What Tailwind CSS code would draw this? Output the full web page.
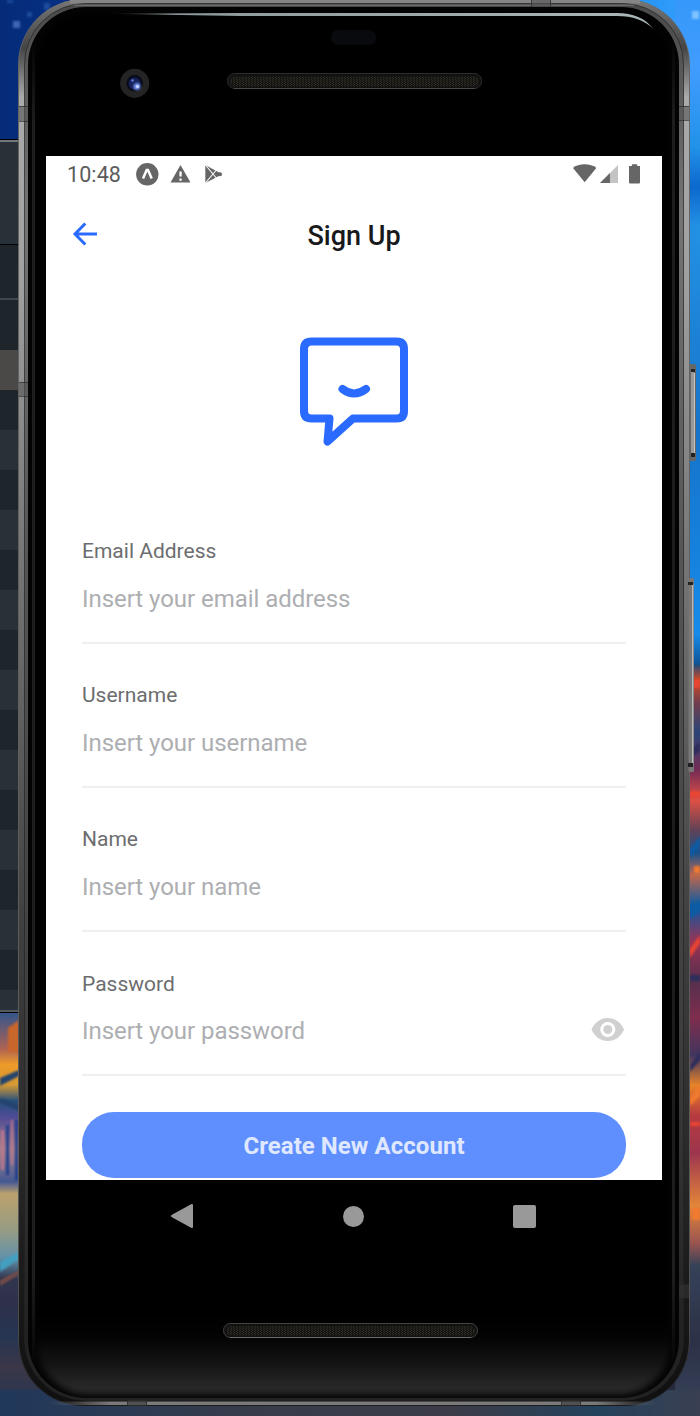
<!DOCTYPE html>
<html lang="en">
<head>
<meta charset="utf-8">
<title>Sign Up</title>
<script src="https://cdn.jsdelivr.net/npm/@tailwindcss/browser@4"></script>
</head>
<body class="relative h-[1416px] w-[700px] overflow-hidden bg-[#252b3d] font-['Roboto','Noto_Sans',sans-serif]">
<svg class="absolute inset-0" width="700" height="1416" viewBox="0 0 700 1416" aria-hidden="true">
  <defs>
    <linearGradient id="topsky"><stop offset="0" stop-color="#052b78"/><stop offset=".12" stop-color="#073187"/><stop offset=".85" stop-color="#178bea"/><stop offset="1" stop-color="#38a0ff"/></linearGradient>
    <linearGradient id="rightsky" x2="0" y2="1"><stop offset="0" stop-color="#3598fa"/><stop offset=".1" stop-color="#419cff"/><stop offset=".22" stop-color="#2292e8"/><stop offset=".28" stop-color="#0c68ce"/><stop offset=".34" stop-color="#2391e3"/><stop offset=".65" stop-color="#1674ca"/><stop offset=".95" stop-color="#168bea"/><stop offset="1" stop-color="#0d4b89"/></linearGradient>
    <linearGradient id="leftcity" x2="0" y2="1"><stop offset="0" stop-color="#30558c"/><stop offset=".09" stop-color="#ac6255"/><stop offset=".13" stop-color="#ed9b28"/><stop offset=".18" stop-color="#d79a34"/><stop offset=".22" stop-color="#25517d"/><stop offset=".26" stop-color="#504b96"/><stop offset=".34" stop-color="#a6838c"/><stop offset=".42" stop-color="#445993"/><stop offset=".45" stop-color="#bba16c"/><stop offset=".54" stop-color="#969c83"/><stop offset=".61" stop-color="#6291ab"/><stop offset=".66" stop-color="#30364f"/><stop offset=".72" stop-color="#2f3049"/><stop offset=".8" stop-color="#253553"/><stop offset=".88" stop-color="#3b3748"/><stop offset="1" stop-color="#203554"/></linearGradient>
    <linearGradient id="rightcity" x2="0" y2="1"><stop offset="0" stop-color="#254b78"/><stop offset=".02" stop-color="#d34823"/><stop offset=".05" stop-color="#723d4d"/><stop offset=".09" stop-color="#294477"/><stop offset=".14" stop-color="#752c54"/><stop offset=".18" stop-color="#df5044"/><stop offset=".22" stop-color="#614256"/><stop offset=".25" stop-color="#17518d"/><stop offset=".28" stop-color="#c1674b"/><stop offset=".32" stop-color="#095aa4"/><stop offset=".37" stop-color="#9b3253"/><stop offset=".42" stop-color="#55304e"/><stop offset=".47" stop-color="#7f2d4d"/><stop offset=".52" stop-color="#41365f"/><stop offset=".56" stop-color="#e78328"/><stop offset=".6" stop-color="#b63a3f"/><stop offset=".65" stop-color="#9d354e"/><stop offset=".72" stop-color="#e38639"/><stop offset=".77" stop-color="#9a5450"/><stop offset=".8" stop-color="#354157"/><stop offset=".9" stop-color="#2c3147"/><stop offset="1" stop-color="#38445b"/></linearGradient>
    <linearGradient id="base"><stop offset="0" stop-color="#20385b"/><stop offset=".35" stop-color="#373c4b"/><stop offset=".65" stop-color="#3c3c49"/><stop offset=".85" stop-color="#24425b"/><stop offset="1" stop-color="#3a3f52"/></linearGradient>
    <linearGradient id="metal" x2="0" y2="1"><stop offset="0" stop-color="#777"/><stop offset=".035" stop-color="#454545"/><stop offset=".07" stop-color="#aaa"/><stop offset=".2" stop-color="#a0a0a0"/><stop offset=".35" stop-color="#808080"/><stop offset=".5" stop-color="#626262"/><stop offset=".65" stop-color="#414141"/><stop offset=".78" stop-color="#303030"/><stop offset=".92" stop-color="#191919"/><stop offset="1" stop-color="#101010"/></linearGradient>
    <linearGradient id="outer" x2="0" y2="1"><stop offset="0" stop-color="#666"/><stop offset=".85" stop-color="#5a5a5a"/><stop offset=".95" stop-color="#4a4a4a"/><stop offset=".98" stop-color="#1a1a1a"/></linearGradient>
    <linearGradient id="inner" x2="0" y2="1"><stop offset="0" stop-color="#4a4a4a"/><stop offset=".15" stop-color="#747474"/><stop offset=".4" stop-color="#555"/><stop offset=".75" stop-color="#3d3d3d"/><stop offset=".95" stop-color="#222"/></linearGradient>
    <linearGradient id="edge"><stop offset="0" stop-color="#777" stop-opacity="0"/><stop offset=".1" stop-color="#7a7a7a"/><stop offset=".9" stop-color="#7a7a7a"/><stop offset="1" stop-color="#777" stop-opacity="0"/></linearGradient>
    <linearGradient id="glow" gradientUnits="userSpaceOnUse" x1="0" y1="1310" x2="0" y2="1397"><stop offset="0" stop-color="#000"/><stop offset=".3" stop-color="#030303"/><stop offset=".6" stop-color="#131313"/><stop offset="1" stop-color="#303030"/></linearGradient>
    <linearGradient id="rim" gradientUnits="userSpaceOnUse" x1="0" y1="40" x2="0" y2="1370"><stop offset="0" stop-color="#1d1d1d" stop-opacity="0"/><stop offset=".06" stop-color="#1d1d1d"/><stop offset=".93" stop-color="#1d1d1d"/><stop offset="1" stop-color="#1d1d1d" stop-opacity="0"/></linearGradient>
    <linearGradient id="shine"><stop offset="0" stop-color="#8c999c" stop-opacity="0"/><stop offset=".12" stop-color="#8c999c"/><stop offset="1" stop-color="#abb6b7"/></linearGradient>
    <pattern id="mesh" width="3" height="2" patternUnits="userSpaceOnUse"><path fill="#151411" d="M0 0h3v2H0z"/><path fill="#302e29" d="M0 0h1v1H0zM2 1h1v1H2z"/></pattern>
    <filter id="soft" x="-20%" y="-20%" width="140%" height="140%" color-interpolation-filters="sRGB"><feGaussianBlur stdDeviation="1.1"/></filter>
    <filter id="wide" x="-10%" y="-10%" width="120%" height="120%" color-interpolation-filters="sRGB"><feGaussianBlur stdDeviation="3"/></filter>
  </defs>
  <!-- wallpaper -->
  <path fill="url(#topsky)" d="M0 0h700v140H0z"/>
  <path fill="url(#rightsky)" d="M675 0h25v668h-25z"/>
  <path fill="url(#rightcity)" d="M675 665h25v751h-25z"/>
  <path fill="url(#leftcity)" d="M0 1012h60v404H0z"/>
  <path fill="url(#base)" d="M0 1390h700v26H0z"/>
  <g filter="url(#soft)">
    <path fill="#3c66b5" d="M13 21h7v7h-7z"/><path fill="#1d4b9d" d="M44 3h6v7h-6zM27 12h5v5h-5zM7 0h6v3H7z"/>
    <path fill="#7ec2ff" d="M692 11h7v8h-7z"/>
    <path fill="#c9662c" d="M8 1028l11-8v32H8z"/><path fill="#24446e" d="M0 1078l19-8v6L0 1086zM0 1098l19 6v7L0 1103z"/>
    <path fill="#b9768b" d="M1 1130h3v40H1zM11 1120h2v45h-2z"/><path fill="#213e8a" d="M6 1125h3v50H6zM15 1120h3v60h-3z"/>
    <path fill="#43a0c0" d="M0 1262l19-10v7L0 1272z"/><path fill="#744c4a" d="M0 1280l20-10v4L0 1286z"/>
    <path fill="#f07a30" d="M690 1098l10-14v12l-10 10zM694 866h6v7h-6zM692 1208h8v12h-8z"/>
    <path fill="#e94533" d="M690 791h10v6h-10zM689 950l11-15v8l-10 15zM690 1122h10v4h-10zM690 680h10v8h-10z"/>
    <path fill="#0c5ca5" d="M690 850l10-14v10l-10 12zM690 908l10-7v10l-10 8z"/>
    <path fill="#2d2d5d" d="M690 750l10-8v9l-10 7zM690 975h10v6h-10zM690 1065l10-13v8l-10 12z"/>
  </g>
  <!-- editor window behind the device -->
  <path fill="#1e262c" d="M0 139h30v873H0z"/><path fill="#293138" d="M0 142h30v102H0zM0 430h30v40H0zM0 510h30v40H0zM0 590h30v40H0zM0 670h30v40H0zM0 750h30v40H0zM0 830h30v40H0zM0 910h30v40H0zM0 990h30v20H0z"/>
  <path fill="#4a4948" d="M0 350h30v40H0z"/><path fill="#000" d="M0 139h30v1H0zM0 244h30v1H0zM0 1012h30v1H0z"/><path fill="#73787c" d="M0 140h30v2H0z"/><path fill="#555a5e" d="M0 1010h30v2H0z"/><path fill="#3f464c" d="M0 298h30v2H0z"/>
  <!-- side buttons -->
  <rect x="688" y="364" width="8" height="97" rx="2" fill="#676767"/><path fill="#999" d="M691 370h3v84h-3z"/><path fill="#c4c4c4" d="M694 373h1v80h-1z"/><path fill="#222" d="M691 369h4v3h-4zM691 453h4v4h-4z"/>
  <!-- chassis -->
  <rect x="18" y="-1" width="672" height="1407" rx="66" fill="url(#outer)"/>
  <rect x="19" y="-1" width="670" height="1406" rx="65" fill="url(#metal)"/>
  <path d="M70 1h570" stroke="#858585" stroke-width="5"/>
  <rect x="24.500" y="3.500" width="659" height="1397" rx="61" fill="url(#inner)" stroke="#222" stroke-opacity=".7"/>
  <path d="M74 5.200h560" stroke="#777"/>
  <rect x="28" y="7" width="651" height="1391" rx="58" fill="#040404"/>
  <rect x="37" y="14" width="633" height="1380" rx="50" fill="url(#glow)" filter="url(#wide)"/>
  <path fill="url(#rim)" d="M32 40h3v1330h-3zM672 40h3v1330h-3z"/>
  <path fill="url(#shine)" d="M108 13.700L240 13h377c16 0 28 5 36.500 16C644 20 633 16 617 16H240z"/>
  <path fill="url(#edge)" d="M50 1401.500h606v3.500H50z"/>
  <g fill="#555" fill-opacity=".6"><path d="M19 106h9v15h-9zM19 382h9v14h-9zM679 106h10v14h-10zM531-1h20v7h-20z"/><path fill="#333" d="M679 1284h10v14h-10zM127 1400h20v6h-20zM561 1400h20v6h-20z"/></g>
  <g stroke="#222" stroke-opacity=".6"><path d="M19 106.500h9M19 121.500h9M19 382.500h9M19 396.500h9M679 106.500h10M679 120.500h10M679 1284.500h10M679 1298.500h10M531.500 0v7M550.500 0v7M127.500 1400v6M146.500 1400v6M561.500 1400v6M580.500 1400v6"/></g>
  <rect x="688.500" y="578" width="5.500" height="194" rx="1.500" fill="#777"/><path fill="#b9b9b9" d="M692 584h1.300v180H692z"/><path fill="#222" d="M688 582h5v3h-5zM688 763h5v4h-5z"/>
  <!-- sensors, camera and speakers -->
  <rect x="331" y="30" width="45" height="15" rx="7" fill="#090a0e"/>
  <circle cx="134.700" cy="83.300" r="14.600" fill="#252424"/><circle cx="134.700" cy="83.300" r="8.300" fill="#080b19"/><circle cx="134.500" cy="83.500" r="6" fill="#152158"/><g filter="url(#soft)"><circle cx="137" cy="86.500" r="3.500" fill="#7794f1"/></g><circle cx="137.500" cy="86.500" r="1.700" fill="#c0d0ff"/><circle cx="132.500" cy="80.500" r="1.300" fill="#637ad4"/>
  <rect x="227.500" y="73.500" width="254" height="15" rx="7" fill="#111" stroke="#2c2c2c"/><rect x="230" y="76.500" width="249" height="10" rx="5" fill="url(#mesh)"/><path d="M234 88.500h241" stroke="#4a4a4a"/>
  <rect x="223.500" y="1323.500" width="254" height="14" rx="7" fill="#111" stroke="#444"/><rect x="226" y="1326" width="249" height="9.500" rx="4.700" fill="url(#mesh)"/><path d="M230 1337.500h241" stroke="#6c6c6c"/>
</svg>

<div class="relative px-[38px] pl-[46px] pt-[156px]">
  <main class="flex h-[1024px] w-[616px] flex-col overflow-hidden bg-white">
    <div class="flex h-[38px] shrink-0 items-center justify-between pl-[21px] pr-[21px]">
      <div class="flex items-center">
        <span class="w-[68px] text-[21.5px] leading-none tracking-[0.1px] text-[#5c5c5c]">10:48</span>
        <svg width="92" height="24" viewBox="0 0 92 24" fill="#666"><circle cx="12.300" cy="11.300" r="11.200"/><path d="M8 15.500l3.700-8.500h1.300l3.700 8.500" fill="none" stroke="#fff" stroke-width="2.500"/><path d="M45.500 2l10 17.600h-20z"/><path d="M44.400 8.600h2.300v5h-2.300zM44.400 15.400h2.300v2.300h-2.300z" fill="#fff"/><path d="M70.300 2l17 9.300-17 8.700z"/><path d="M70 1.500l13 15.500M70 20.500L83 5" stroke="#fff" stroke-width="1.100" fill="none"/><circle cx="85" cy="11.200" r="2"/></svg>
      </div>
      <svg width="69" height="24" viewBox="0 0 69 24" fill="#666"><path d="M1 5C6 0 19 0 24.300 5L12.700 19.200z"/><path d="M46 2v18H28z" fill="#c4c4c4"/><path d="M38 10v10H28z"/><path d="M57 3h2.900V1.200h5.300V3H68v16.500q0 1-1 1h-9q-1 0-1-1V3z"/></svg>
    </div>
    <header class="grid h-[82px] shrink-0 grid-cols-[1fr_auto_1fr] items-center pl-[26px] pr-[26px]">
      <svg width="28" height="28" viewBox="0 0 28 28" class="-mt-[2px]" fill="none" stroke="#2b6aff" stroke-width="3"><path d="M25 14H3.500M13.300 3.500L3 14l10.300 10.500"/></svg>
      <h1 class="pt-[2px] text-[27px] font-medium leading-none text-[#18191b]">Sign Up</h1>
      <span></span>
    </header>
    <div class="flex h-[241px] shrink-0 justify-center pt-[61px]">
      <svg width="108" height="109" viewBox="0 0 108 109" fill="none" stroke="#2b6aff" stroke-width="8" stroke-linejoin="round" stroke-linecap="round"><path d="M11.500 4.500h85q7.500 0 7.500 7.500v62q0 7.500-7.500 7.500H53L27.500 104.500l2-23h-18q-7.500 0-7.500-7.500V12q0-7.500 7.500-7.500z"/><path d="M42.500 52q11.500 9 23.500 0"/></svg>
    </div>
    <form class="flex flex-col px-[36px]">
      <label class="flex h-[144.25px] flex-col"><span class="mt-[22px] h-[25px] text-[21px] leading-[25px] text-[#6c6d6f]">Email Address</span><span class="mt-[18px] h-[34px] text-[24px] leading-[34px] tracking-[-0.05px] text-[#adaeb2]">Insert your email address</span><span class="mt-[25.5px] h-[2px] bg-[#efeff0]"></span></label>
      <label class="flex h-[144.25px] flex-col"><span class="mt-[22px] h-[25px] text-[21px] leading-[25px] text-[#6c6d6f]">Username</span><span class="mt-[18px] h-[34px] text-[24px] leading-[34px] tracking-[-0.05px] text-[#adaeb2]">Insert your username</span><span class="mt-[25.5px] h-[2px] bg-[#efeff0]"></span></label>
      <label class="flex h-[144.25px] flex-col"><span class="mt-[21.5px] h-[25px] text-[21px] leading-[25px] text-[#6c6d6f]">Name</span><span class="mt-[18px] h-[34px] text-[24px] leading-[34px] tracking-[-0.05px] text-[#adaeb2]">Insert your name</span><span class="mt-[25.5px] h-[2px] bg-[#efeff0]"></span></label>
      <label class="flex h-[144.25px] flex-col"><span class="mt-[22px] h-[25px] text-[21px] leading-[25px] text-[#6c6d6f]">Password</span><span class="mt-[17.5px] flex h-[34px] items-center justify-between text-[24px] leading-[34px] tracking-[-0.05px] text-[#adaeb2]">Insert your password<svg width="36" height="30" viewBox="0 0 36 30" class="-mt-[2px]"><path fill="#d0d0d0" d="M1.500 14.500C4.500 7.500 10.500 3 17.800 3S31 7.500 34 14.500C31 21.500 25 26 17.800 26S4.500 21.500 1.500 14.500z"/><circle cx="17.800" cy="14.500" r="7.500" fill="#fff"/><circle cx="17.800" cy="14.500" r="4.500" fill="#d0d0d0"/></svg></span><span class="mt-[25.5px] h-[2px] bg-[#efeff0]"></span></label>
      <button type="button" class="mt-[18px] h-[66px] rounded-[32px] bg-[#5f8fff] pt-[2px] text-[24px] font-bold tracking-[0.05px] text-[#dfe8ff]">Create New Account</button>
    </form>
  </main>
  <nav class="flex h-[72px] w-[616px] items-center justify-between pl-[124px] pr-[126.5px]">
    <svg width="24" height="26" viewBox="0 0 24 26"><path d="M22 2v22L2 13z" fill="#999" stroke="#999" stroke-width="2" stroke-linejoin="round"/></svg>
    <span class="size-[21px] rounded-full bg-[#999]"></span>
    <span class="size-[23px] rounded-[2px] bg-[#999]"></span>
  </nav>
</div>
</body>
</html>
